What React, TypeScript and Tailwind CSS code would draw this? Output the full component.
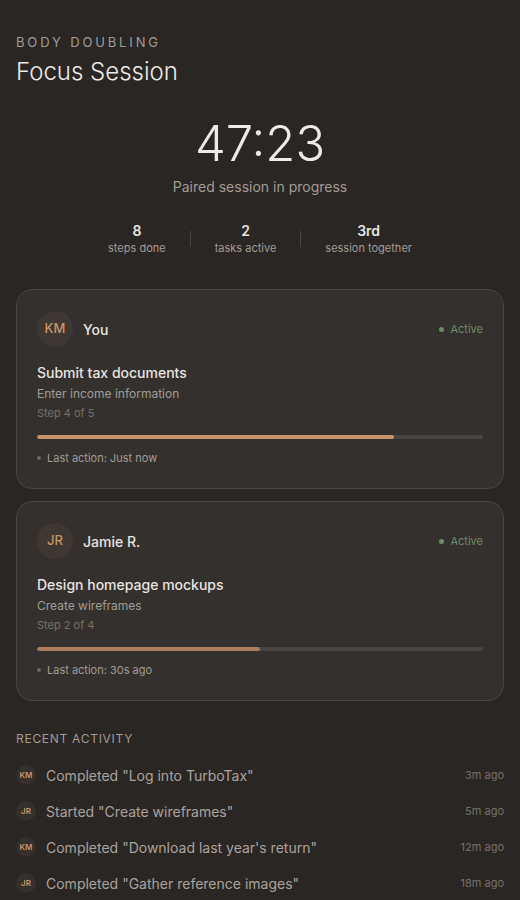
import React from "react";

const font = { fontFamily: "Inter, 'Noto Sans', sans-serif" };

type Partner = {
  initials: string;
  name: string;
  task: string;
  step: string;
  stepLabel: string;
  progress: number;
  last: string;
  warm?: boolean;
};

const partners: Partner[] = [
  {
    initials: "KM",
    name: "You",
    task: "Submit tax documents",
    step: "Enter income information",
    stepLabel: "Step 4 of 5",
    progress: 80,
    last: "Last action: Just now",
    warm: true,
  },
  {
    initials: "JR",
    name: "Jamie R.",
    task: "Design homepage mockups",
    step: "Create wireframes",
    stepLabel: "Step 2 of 4",
    progress: 50,
    last: "Last action: 30s ago",
  },
];

const activity = [
  { who: "KM", text: 'Completed "Log into TurboTax"', time: "3m ago" },
  { who: "JR", text: 'Started "Create wireframes"', time: "5m ago" },
  { who: "KM", text: 'Completed "Download last year\'s return"', time: "12m ago" },
  { who: "JR", text: 'Completed "Gather reference images"', time: "18m ago" },
];

function Stat({ value, label }: { value: string; label: string }) {
  return (
    <div className="flex flex-col items-center">
      <span className="text-[14px] font-semibold leading-[20px] text-[#e8e4e0]">{value}</span>
      <span className="text-[11px] leading-[15px] text-[#a29c97]">{label}</span>
    </div>
  );
}

function PartnerCard({ p }: { p: Partner }) {
  return (
    <div
      className={
        "rounded-2xl border bg-[#34302d] px-5 pt-[21px] pb-[23px] " +
        (p.warm ? "border-[#4f433a]" : "border-[#4a4542]")
      }
    >
      <div className="flex items-center justify-between">
        <div className="flex items-center gap-[10px]">
          <div className="flex h-9 w-9 items-center justify-center rounded-full bg-[#3f3732] text-[13px] font-medium text-[#c8956a]">
            {p.initials}
          </div>
          <span className="text-[14px] font-medium text-[#e8e4e0]">{p.name}</span>
        </div>
        <div className="flex items-center gap-[6px] text-[11px] text-[#6b8f63]">
          <span className="h-[5px] w-[5px] rounded-full bg-[#6b8f63]" />
          Active
        </div>
      </div>
      <div className="mt-[16px] text-[14px] font-medium leading-[20px] text-[#e8e4e0]">{p.task}</div>
      <div className="mt-[2px] text-[12px] leading-[18px] text-[#a29c97]">{p.step}</div>
      <div className="mt-[2px] text-[11px] leading-[16px] text-[#77716c]">{p.stepLabel}</div>
      <div className="mt-[14px] h-1 w-full overflow-hidden rounded-full bg-[#4a4542]">
        <div
          className={"h-full rounded-full " + (p.warm ? "bg-[#c8956a]" : "bg-[#a87c5c]")}
          style={{ width: `${p.progress}%` }}
        />
      </div>
      <div className="mt-[12px] flex items-center gap-[6px] text-[11px] leading-[14px] text-[#a29c97]">
        <span className="h-[4px] w-[4px] rounded-full bg-[#6a645f]" />
        {p.last}
      </div>
    </div>
  );
}

export default function App() {
  return (
    <div className="min-h-[900px] w-full bg-[#2a2623] px-4 pt-[34px]" style={font}>
      <header>
        <div className="text-[13px] leading-[16px] tracking-[0.22em] text-[#a29c97]">BODY DOUBLING</div>
        <h1 className="mt-[7px] text-[24px] font-light leading-[30px] text-[#eeeae6]">Focus Session</h1>
      </header>

      <section className="mt-[28px] flex flex-col items-center">
        <div className="text-[49px] font-light leading-[58px] text-[#eeeae6]">47:23</div>
        <div className="mt-[4px] text-[14px] leading-[20px] text-[#a29c97]">Paired session in progress</div>
        <div className="mt-[24px] flex items-center">
          <Stat value="8" label="steps done" />
          <div className="mx-6 h-4 w-px bg-[#4a4542]" />
          <Stat value="2" label="tasks active" />
          <div className="mx-6 h-4 w-px bg-[#4a4542]" />
          <Stat value="3rd" label="session together" />
        </div>
      </section>

      <section className="mt-[33px] flex flex-col gap-3">
        {partners.map((p) => (
          <PartnerCard key={p.name} p={p} />
        ))}
      </section>

      <section className="mt-[30px]">
        <div className="text-[12px] leading-[16px] tracking-[0.06em] text-[#a29c97]">RECENT ACTIVITY</div>
        <ul className="mt-[10px] flex flex-col">
          {activity.map((a) => (
            <li key={a.text} className="flex h-9 items-center justify-between">
              <div className="flex items-center gap-[10px]">
                <span className="flex h-5 w-5 items-center justify-center rounded-full bg-[#35302c] text-[8px] font-semibold text-[#c8956a]">
                  {a.who}
                </span>
                <span className="text-[14px] text-[#aaa39d]">{a.text}</span>
              </div>
              <span className="text-[11px] text-[#77716c]">{a.time}</span>
            </li>
          ))}
        </ul>
      </section>
    </div>
  );
}
